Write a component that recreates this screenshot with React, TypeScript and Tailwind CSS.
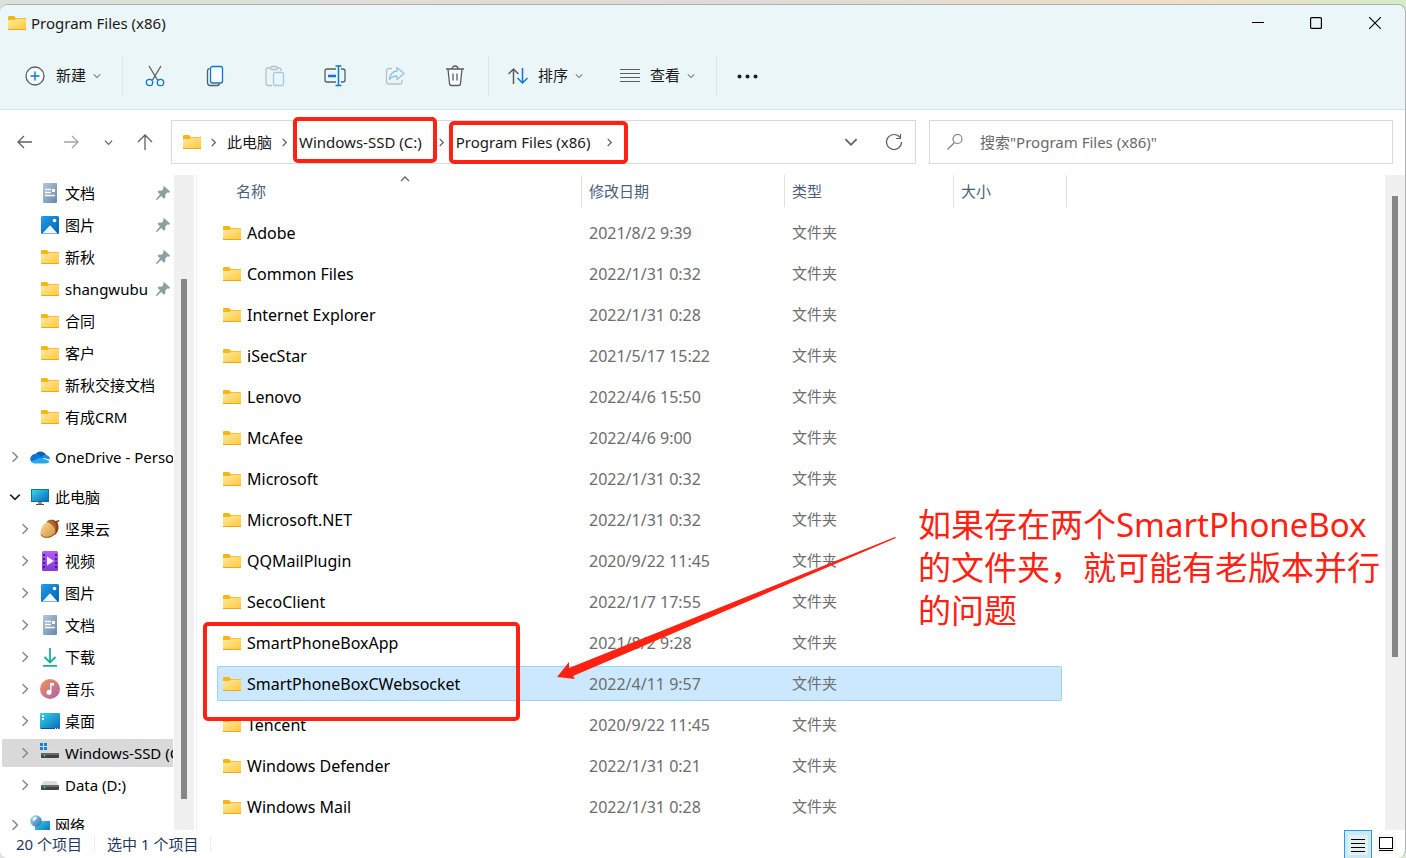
import React from 'react';

type IconName =
    | 'folder' | 'document' | 'picture' | 'onedrive' | 'pc' | 'nut' | 'video'
    | 'download' | 'music' | 'desktop' | 'systemDrive' | 'drive' | 'network';

interface NavItem {
    id: string;
    label: string;
    icon: IconName;
    level: 0 | 1;
    expander?: 'open' | 'closed';
    pinned?: boolean;
    active?: boolean;
}

interface FileRow {
    name: string;
    modified: string;
    selected?: boolean;
}

const navGroups: NavItem[][] = [
    [
        { id: 'q-docs', label: '文档', icon: 'document', level: 1, pinned: true },
        { id: 'q-pics', label: '图片', icon: 'picture', level: 1, pinned: true },
        { id: 'q-xinqiu', label: '新秋', icon: 'folder', level: 1, pinned: true },
        { id: 'q-shangwubu', label: 'shangwubu', icon: 'folder', level: 1, pinned: true },
        { id: 'q-hetong', label: '合同', icon: 'folder', level: 1 },
        { id: 'q-kehu', label: '客户', icon: 'folder', level: 1 },
        { id: 'q-jiaojie', label: '新秋交接文档', icon: 'folder', level: 1 },
        { id: 'q-crm', label: '有成CRM', icon: 'folder', level: 1 },
    ],
    [{ id: 'onedrive', label: 'OneDrive - Personal', icon: 'onedrive', level: 0, expander: 'closed' }],
    [
        { id: 'pc', label: '此电脑', icon: 'pc', level: 0, expander: 'open' },
        { id: 'nut', label: '坚果云', icon: 'nut', level: 1, expander: 'closed' },
        { id: 'video', label: '视频', icon: 'video', level: 1, expander: 'closed' },
        { id: 'pics', label: '图片', icon: 'picture', level: 1, expander: 'closed' },
        { id: 'docs', label: '文档', icon: 'document', level: 1, expander: 'closed' },
        { id: 'downloads', label: '下载', icon: 'download', level: 1, expander: 'closed' },
        { id: 'music', label: '音乐', icon: 'music', level: 1, expander: 'closed' },
        { id: 'desktop', label: '桌面', icon: 'desktop', level: 1, expander: 'closed' },
        { id: 'drive-c', label: 'Windows-SSD (C:)', icon: 'systemDrive', level: 1, expander: 'closed', active: true },
        { id: 'drive-d', label: 'Data (D:)', icon: 'drive', level: 1, expander: 'closed' },
    ],
    [{ id: 'network', label: '网络', icon: 'network', level: 0, expander: 'closed' }],
];

const files: FileRow[] = [
    { name: 'Adobe', modified: '2021/8/2 9:39' },
    { name: 'Common Files', modified: '2022/1/31 0:32' },
    { name: 'Internet Explorer', modified: '2022/1/31 0:28' },
    { name: 'iSecStar', modified: '2021/5/17 15:22' },
    { name: 'Lenovo', modified: '2022/4/6 15:50' },
    { name: 'McAfee', modified: '2022/4/6 9:00' },
    { name: 'Microsoft', modified: '2022/1/31 0:32' },
    { name: 'Microsoft.NET', modified: '2022/1/31 0:32' },
    { name: 'QQMailPlugin', modified: '2020/9/22 11:45' },
    { name: 'SecoClient', modified: '2022/1/7 17:55' },
    { name: 'SmartPhoneBoxApp', modified: '2021/8/2 9:28' },
    { name: 'SmartPhoneBoxCWebsocket', modified: '2022/4/11 9:57', selected: true },
    { name: 'Tencent', modified: '2020/9/22 11:45' },
    { name: 'Windows Defender', modified: '2022/1/31 0:21' },
    { name: 'Windows Mail', modified: '2022/1/31 0:28' },
];

const FolderIcon: React.FC = () => (
    <svg width="18" height="14" viewBox="0 0 18 14" className="shrink-0">
        <path d="M0 1a1 1 0 0 1 1-1h5l2 2h10v4H0z" fill="#f8b516" />
        <path d="M0 4h6.500l1.500-1.200h10V13H0z" fill="url(#folder-face)" />
        <path d="M0 13h18v1H0z" fill="#eda91e" />
    </svg>
);

// gradients shared by all the icons on the page
const IconDefs: React.FC = () => (
    <svg width="0" height="0" className="absolute" aria-hidden="true">
        <defs>
            <linearGradient id="folder-face" x1="0" y1="0" x2="1" y2="1">
                <stop offset="0" stopColor="#ffe9a2" />
                <stop offset="1" stopColor="#ffca3c" />
            </linearGradient>
            <linearGradient id="doc-face" x1="0" y1="0" x2="1" y2="1">
                <stop offset="0" stopColor="#b4c8dc" />
                <stop offset="1" stopColor="#6a87a6" />
            </linearGradient>
            <linearGradient id="pic-face" x1="0" y1="0" x2="1" y2="1">
                <stop offset="0" stopColor="#1ea0ea" />
                <stop offset="1" stopColor="#0560b4" />
            </linearGradient>
            <linearGradient id="screen-face" x1="0" y1="0" x2="1" y2="1">
                <stop offset="0" stopColor="#34d6e8" />
                <stop offset="1" stopColor="#0a68bd" />
            </linearGradient>
            <linearGradient id="video-face" x1="0" y1="0" x2="0" y2="1">
                <stop offset="0" stopColor="#b45cf6" />
                <stop offset="1" stopColor="#8238d8" />
            </linearGradient>
            <linearGradient id="nut-face" x1="0" y1="0" x2="1" y2="1">
                <stop offset="0" stopColor="#f8dc98" />
                <stop offset="1" stopColor="#d09038" />
            </linearGradient>
            <linearGradient id="music-face" x1="0" y1="0" x2="1" y2="1">
                <stop offset="0" stopColor="#f49350" />
                <stop offset="1" stopColor="#a860b4" />
            </linearGradient>
            <linearGradient id="globe-face" x1="0" y1="0" x2="1" y2="1">
                <stop offset="0" stopColor="#b4dcf2" />
                <stop offset="1" stopColor="#1f6ca8" />
            </linearGradient>
        </defs>
    </svg>
);

const DriveBody: React.FC = () => (
    <>
        <path d="M4 6h12l3 5H1z" fill="#d9dcdf" />
        <rect x="1" y="10" width="18" height="5" rx="1" fill="#414141" />
        <rect x="1" y="10" width="18" height="2" rx="1" fill="#686868" />
        <circle cx="4.500" cy="12.500" r="1" fill="#2fdc4a" />
    </>
);

const ItemIcon: React.FC<{ name: IconName }> = ({ name }) => {
    if (name === 'folder') {
        return <FolderIcon />;
    }
    return (
        <svg width="20" height="20" viewBox="0 0 20 20" className="shrink-0">
            {name === 'document' && (
                <>
                    <rect x="3" width="14" height="20" rx="1" fill="url(#doc-face)" />
                    <path d="M5 6.500h6M5 9.500h6M5 12.500h10" stroke="#fff" strokeWidth="1.300" />
                    <path d="M12 6h3v3h-3z" fill="#fff" />
                </>
            )}
            {name === 'picture' && (
                <>
                    <rect x="1" y="1" width="18" height="18" rx="1.500" fill="url(#pic-face)" />
                    <path d="M2.500 18.500 9.200 11a1 1 0 0 1 1.600 0l6.700 7.500z" fill="#f2f8fe" />
                    <circle cx="14.500" cy="5.500" r="1.800" fill="#fff" />
                </>
            )}
            {name === 'onedrive' && (
                <>
                    <path d="M5 8a6 6 0 0 1 11 0l-4 4z" fill="#0f5fb8" />
                    <path d="M5.500 7A4.800 4.800 0 0 0 1.500 15l10-4.500A6 6 0 0 0 5.500 7z" fill="#0a78d6" />
                    <path d="M15.500 8a4.400 4.400 0 0 1 4.500 4.500l-9-2A5 5 0 0 1 15.500 8z" fill="#1490df" />
                    <path d="M10.500 10.500 1.500 15a4 4 0 0 0 3 1.500h11.500a4 4 0 0 0 3.600-2.500z" fill="#2ba6ea" />
                </>
            )}
            {name === 'pc' && (
                <>
                    <rect x="1" y="2" width="18" height="13" rx="0.500" fill="#1a6f98" />
                    <rect x="2" y="3" width="16" height="11" fill="url(#screen-face)" />
                    <path d="M8 15h4v2H8z" fill="#8a9298" />
                    <path d="M6 17h8v1H6z" fill="#4d5257" />
                </>
            )}
            {name === 'nut' && (
                <>
                    <path d="M7 2.500C9 .500 13 0 15.500 2l3.500-1 .500 1-2.200 1.500c2 3 2 9-2.300 12.500l-4 1z" fill="#8a4518" />
                    <path d="M6.500 3c3-3 7-2 8.500 1s1 8-2 11z" fill="#b5662a" />
                    <path d="M7 3C3 5 .500 10 .500 14.500c.500 4 6 5 10 4 4-1.500 5.500-4.500 4.500-8C13.500 7 10.500 4 7 3z" fill="url(#nut-face)" />
                    <path d="M1 15.500c2 4 10 4 13.500-1" stroke="#8a5a20" fill="none" />
                </>
            )}
            {name === 'video' && (
                <>
                    <rect x="2" width="16" height="20" rx="1.500" fill="url(#video-face)" />
                    <path d="M4 3v15M16 3v15" stroke="#43207c" strokeWidth="2" strokeDasharray="2 2" />
                    <path d="M7 5.500v9l7-4.500z" fill="#f4eefc" />
                </>
            )}
            {name === 'download' && (
                <path d="M10 1v14M4.500 10l5.500 5.500 5.500-5.500M3 18.800h14" stroke="#17b096" strokeWidth="1.800" fill="none" />
            )}
            {name === 'music' && (
                <>
                    <circle cx="10" cy="10" r="10" fill="url(#music-face)" />
                    <path d="M10 4h4v2.500h-2.500v6.700A2.500 2.500 0 1 1 10 11z" fill="#fff" />
                </>
            )}
            {name === 'desktop' && (
                <>
                    <rect y="2" width="20" height="16" rx="1" fill="url(#screen-face)" />
                    <path d="M2 4h2v2H2zM2 7h2v2H2z" fill="#fff" />
                    <path d="M1 17.500h18" stroke="#0a4d90" />
                    <path d="M15 17.500h1M17 17.500h1" stroke="#fff" />
                </>
            )}
            {name === 'systemDrive' && (
                <>
                    <DriveBody />
                    <path d="M0 0h8v8H0z" fill="#d9d9d9" />
                    <path d="M0 0h3v3H0zM4 0h3v3H4zM0 4h3v3H0zM4 4h3v3H4z" fill="#1180d8" />
                </>
            )}
            {name === 'drive' && <DriveBody />}
            {name === 'network' && (
                <>
                    <rect x="5" y="6" width="15" height="12" fill="url(#screen-face)" />
                    <circle cx="6" cy="6" r="5.800" fill="url(#globe-face)" />
                    <path d="M3 3c2-2 4-1 4 0S5 5 4 6 2 5 3 3z" fill="#e4f4fc" />
                </>
            )}
        </svg>
    );
};

const PinIcon: React.FC = () => (
    <svg width="14" height="14" viewBox="0 0 14 14" className="mr-[3px] ml-auto shrink-0">
        <path d="M8 0l6 5.500-1 1.200-1.800-.2-2 2.300.2 2.700-1.400 1.300L5.200 10 1 14l-1-.200.200-1L4 8.500 1.500 5.800 3 4.500l2.500.2L7.500 2.600 7.200 1z" fill="#929ea6" />
    </svg>
);

const Chevron: React.FC<{ dir: 'right' | 'down' | 'up'; size?: number; className?: string }> = ({ dir, size = 10, className = '' }) => {
    const paths = {
        right: 'M3 1l4 4-4 4',
        down: 'M1 3l4 4 4-4',
        up: 'M1 6l4-4 4 4',
    };
    return (
        <svg width={size} height={size} viewBox="0 0 10 10" className={`shrink-0 ${className}`}>
            <path d={paths[dir]} fill="none" stroke="currentColor" strokeWidth="1.300" />
        </svg>
    );
};

const Separator: React.FC<{ className?: string }> = ({ className = '' }) => (
    <div className={`h-10 w-px bg-[#d9e6e8] ${className}`} />
);

const ToolButton: React.FC<{ label: string; children: React.ReactNode }> = ({ label, children }) => (
    <button type="button" aria-label={label} className="flex h-10 w-[60px] items-center justify-center">
        <svg width="22" height="22" viewBox="0 0 22 22" fill="none" stroke="#5c5c5c" strokeWidth="1.300">
            {children}
        </svg>
    </button>
);

const TitleBar: React.FC = () => (
    <header className="flex h-9 items-center pl-2">
        <FolderIcon />
        <h1 className="ml-[5px] text-[15px] text-[#1a1a1a]">Program Files (x86)</h1>
        <div className="ml-auto flex h-full">
            <button type="button" aria-label="最小化" className="flex w-[58px] items-center justify-center">
                <svg width="12" height="12" viewBox="0 0 12 12"><path d="M0 5.500h12" stroke="#000" /></svg>
            </button>
            <button type="button" aria-label="最大化" className="flex w-[58px] items-center justify-center">
                <svg width="12" height="12" viewBox="0 0 12 12"><rect x="0.600" y="0.600" width="10.800" height="10.800" rx="1" fill="none" stroke="#000" strokeWidth="1.200" /></svg>
            </button>
            <button type="button" aria-label="关闭" className="flex w-[60px] items-center justify-center">
                <svg width="12" height="12" viewBox="0 0 12 12"><path d="M0 0l12 12M12 0L0 12" stroke="#000" strokeWidth="1.100" /></svg>
            </button>
        </div>
    </header>
);

const CommandBar: React.FC = () => (
    <div role="toolbar" className="flex h-[69px] items-center border-b border-[#d5e4e6] pt-px pl-[25px] text-[15px] text-[#1a1a1a]">
        <button type="button" className="flex items-center">
            <svg width="20" height="20" viewBox="0 0 20 20" fill="none">
                <circle cx="10" cy="10" r="9" stroke="#5c5c5c" strokeWidth="1.300" fill="#f7fbfc" />
                <path d="M10 5.500v9M5.500 10h9" stroke="#0a78d4" strokeWidth="1.400" />
            </svg>
            <span className="mr-[7px] ml-[11px]">新建</span>
            <Chevron dir="down" size={8} className="mr-px text-[#777]" />
        </button>
        <Separator className="mr-0.5 ml-5" />
        <ToolButton label="剪切">
            <path d="M5 1l8.500 14M17 1L8.500 15" />
            <circle cx="5.500" cy="17.500" r="3.200" stroke="#0a78d4" />
            <circle cx="16.500" cy="17.500" r="3.200" stroke="#0a78d4" />
        </ToolButton>
        <ToolButton label="复制">
            <path d="M5.500 3.500A2.500 2.500 0 0 0 3.500 6v11.500a3 3 0 0 0 3 3H13a2.500 2.500 0 0 0 2.500-2" />
            <rect x="6.500" y="1.500" width="12" height="16.500" rx="2" stroke="#0a78d4" fill="#f7fbfc" />
        </ToolButton>
        <ToolButton label="粘贴">
            <path d="M7 3H4a2 2 0 0 0-2 2v13.500a2 2 0 0 0 2 2h4M13.500 3H15a2 2 0 0 1 2 2v1" stroke="#b9c0c2" />
            <rect x="6.500" y="1.500" width="7" height="3" rx="1.500" stroke="#b9c0c2" />
            <rect x="9.500" y="7.500" width="10" height="13" rx="1.500" stroke="#9ccbee" />
        </ToolButton>
        <ToolButton label="重命名">
            <path d="M12 4H3a2 2 0 0 0-2 2v9a2 2 0 0 0 2 2h9M17 4h2a2 2 0 0 1 2 2v9a2 2 0 0 1-2 2h-2" />
            <path d="M4 11h8" stroke="#0a78d4" strokeWidth="2.400" />
            <path d="M11.500 1h6M11.500 20.500h6M14.500 1v19" stroke="#0a78d4" strokeWidth="1.500" />
        </ToolButton>
        <ToolButton label="共享">
            <path d="M8 3.500H5a2.500 2.500 0 0 0-2.500 2.500v10.500A2.500 2.500 0 0 0 5 19h10.500a2.500 2.500 0 0 0 2.500-2.500V15" stroke="#b9c0c2" />
            <path d="M13 2.500l7 6-7 6V11c-4 0-5.500 1-7.500 3.500C6 9.500 8.500 6.500 13 6z" stroke="#8fc3ec" strokeLinejoin="round" />
        </ToolButton>
        <ToolButton label="删除">
            <path d="M4 4l1.500 14.500a2 2 0 0 0 2 2h7a2 2 0 0 0 2-2L18 4" fill="#f7fbfc" />
            <path d="M2 4h18M8 4a3 3 0 0 1 6 0" />
            <path d="M9 8.500v7M13 8.500v7" />
        </ToolButton>
        <Separator className="mr-[19px] ml-[3px]" />
        <button type="button" className="mr-9 flex items-center">
            <svg width="20" height="20" viewBox="0 0 20 20" fill="none" strokeWidth="1.500">
                <path d="M5.500 18V3M.500 8l5-5 5 5" stroke="#5c5c5c" />
                <path d="M14.500 2v15M9.500 12l5 5 5-5" stroke="#0a78d4" />
            </svg>
            <span className="mr-[7px] ml-2.5">排序</span>
            <Chevron dir="down" size={8} className="mr-px text-[#777]" />
        </button>
        <button type="button" className="flex items-center">
            <svg width="20" height="20" viewBox="0 0 20 20"><path d="M0 3.500h20M0 7.500h20M0 11.500h20M0 15.500h20" stroke="#5c5c5c" /></svg>
            <span className="mr-[7px] ml-2.5">查看</span>
            <Chevron dir="down" size={8} className="mr-px text-[#777]" />
        </button>
        <Separator className="mr-5 ml-5" />
        <button type="button" aria-label="更多">
            <svg width="22" height="20" viewBox="0 0 22 20" fill="#1a1a1a">
                <circle cx="2.500" cy="10.500" r="2" />
                <circle cx="10.500" cy="10.500" r="2" />
                <circle cx="18.500" cy="10.500" r="2" />
            </svg>
        </button>
    </div>
);

const AddressBar: React.FC = () => (
    <div className="flex items-center pt-2.5 pr-3 pb-[11px] pl-[17px] text-[15px] text-[#1a1a1a]">
        <button type="button" aria-label="后退" className="mr-[30px]">
            <svg width="16" height="16" viewBox="0 0 16 16" fill="none" stroke="#606060" strokeWidth="1.300"><path d="M15 8H1M7 2L1 8l6 6" /></svg>
        </button>
        <button type="button" aria-label="前进" className="mr-[25px]">
            <svg width="16" height="16" viewBox="0 0 16 16" fill="none" stroke="#a4a4a4" strokeWidth="1.300"><path d="M1 8h14M9 2l6 6-6 6" /></svg>
        </button>
        <button type="button" aria-label="最近浏览的位置" className="mr-6">
            <Chevron dir="down" size={9} className="text-[#606060]" />
        </button>
        <button type="button" aria-label="向上" className="mr-[18px]">
            <svg width="16" height="16" viewBox="0 0 16 16" fill="none" stroke="#606060" strokeWidth="1.300"><path d="M8 16V1M1 8l7-7 7 7" /></svg>
        </button>
        <nav aria-label="路径" className="mr-[13px] flex h-11 min-w-0 flex-[732] items-center border border-[#d9d9d9] pl-[11px] whitespace-nowrap">
            <FolderIcon />
            <Chevron dir="right" size={9} className="mx-2 text-[#555]" />
            <a href="#pc" className="pl-px">此电脑</a>
            <Chevron dir="right" size={9} className="mx-2 text-[#555]" />
            <a href="#drive-c" className="pr-[7px] pl-0.5">Windows-SSD (C:)</a>
            <Chevron dir="right" size={9} className="mx-2 text-[#555]" />
            <a href="#program-files" className="pr-[7px] pl-0.5">Program Files (x86)</a>
            <Chevron dir="right" size={9} className="mx-2 text-[#555]" />
            <button type="button" aria-label="历史记录" className="mr-[27px] ml-auto">
                <Chevron dir="down" size={14} className="text-[#606060]" />
            </button>
            <button type="button" aria-label="刷新" className="mr-3">
                <svg width="18" height="18" viewBox="0 0 18 18" fill="none" stroke="#606060" strokeWidth="1.200">
                    <path d="M15 4.500A7.500 7.500 0 1 0 16.500 9M15.500 1v4.500H11" />
                </svg>
            </button>
        </nav>
        <label className="flex h-11 min-w-0 flex-[446] items-center border border-[#d9d9d9] pl-4">
            <svg width="18" height="18" viewBox="0 0 18 18" fill="none" stroke="#777" strokeWidth="1.100" className="shrink-0">
                <circle cx="11.500" cy="6" r="4.500" />
                <path d="M8.500 9.500L1.500 16.500" />
            </svg>
            <input
                type="search"
                aria-label="搜索"
                placeholder={'搜索"Program Files (x86)"'}
                className="ml-4 min-w-0 flex-1 bg-transparent outline-none placeholder:text-[#6a6a6a]"
            />
        </label>
    </div>
);

const NavRow: React.FC<{ item: NavItem }> = ({ item }) => (
    <li className="flex h-8 items-center">
        <a
            href={`#${item.id}`}
            className={`flex h-7 w-full items-center overflow-hidden rounded-l-xs whitespace-nowrap ${item.level === 1 ? 'pl-[18px]' : 'pl-2'} ${item.active ? 'bg-[#d9d9d9]' : ''}`}
        >
            <span className="mr-2.5 flex w-2.5 shrink-0 justify-center">
                {item.expander === 'closed' && <Chevron dir="right" size={12} className="text-[#8a8a8a]" />}
                {item.expander === 'open' && <Chevron dir="down" size={12} className="text-[#222]" />}
            </span>
            <span className="mr-[5px] flex w-5 shrink-0 justify-center">
                <ItemIcon name={item.icon} />
            </span>
            <span>{item.label}</span>
            {item.pinned && <PinIcon />}
        </a>
    </li>
);

const Sidebar: React.FC = () => (
    <nav aria-label="导航窗格" className="w-[174px] shrink-0 overflow-hidden pt-0.5 pr-px pl-0.5 text-[15px] text-black">
        {navGroups.map(group => (
            <ul key={group[0].id} className="mb-2">
                {group.map(item => <NavRow key={item.id} item={item} />)}
            </ul>
        ))}
    </nav>
);

const FileTable: React.FC = () => (
    <div className="min-w-0 flex-1 overflow-hidden border-l border-[#f0f0f0] pl-5">
        <table className="w-[850px] table-fixed border-separate border-spacing-0 text-left">
            <colgroup>
                <col className="w-[365px]" />
                <col className="w-[203px]" />
                <col className="w-[169px]" />
                <col className="w-[113px]" />
            </colgroup>
            <thead className="text-[15px] text-[#4c607a]">
                <tr className="h-[37px] align-top">
                    <th scope="col" className="relative p-0 font-normal">
                        <div className="flex h-8 items-center border-r border-[#e2e2e2] pl-[19px]">名称</div>
                        <Chevron dir="up" className="absolute top-0 left-1/2 text-[#666]" />
                    </th>
                    <th scope="col" className="p-0 font-normal">
                        <div className="flex h-8 items-center border-r border-[#e2e2e2] pl-[7px]">修改日期</div>
                    </th>
                    <th scope="col" className="p-0 font-normal">
                        <div className="flex h-8 items-center border-r border-[#e2e2e2] pl-[7px]">类型</div>
                    </th>
                    <th scope="col" className="p-0 font-normal">
                        <div className="flex h-8 items-center border-r border-[#e2e2e2] pl-[7px]">大小</div>
                    </th>
                </tr>
            </thead>
            <tbody className="text-base text-[#6d6d6d]">
                {files.map(file => {
                    const tone = file.selected ? 'border-[#99d1ff] bg-[#cce8ff]' : 'border-transparent';
                    return (
                        <tr key={file.name} className="h-[41px]" aria-selected={file.selected}>
                            <td className="p-0">
                                <div className={`flex h-[35px] items-center rounded-l-xs border-y border-l pl-[5px] text-black ${tone}`}>
                                    <FolderIcon />
                                    <span className="ml-1.5">{file.name}</span>
                                </div>
                            </td>
                            <td className="p-0">
                                <div className={`flex h-[35px] items-center border-y pl-[7px] ${tone}`}>{file.modified}</div>
                            </td>
                            <td className="p-0 text-[15px]">
                                <div className={`flex h-[35px] items-center border-y pl-[7px] ${tone}`}>文件夹</div>
                            </td>
                            <td className="p-0">
                                <div className={`mr-[5px] h-[35px] rounded-r-xs border-y border-r ${tone}`} />
                            </td>
                        </tr>
                    );
                })}
            </tbody>
        </table>
    </div>
);

const StatusBar: React.FC = () => (
    <footer className="flex h-7 shrink-0 items-center pl-4 text-[15px] text-[#1e395b]">
        <span>20 个项目</span>
        <div className="mx-3 h-4 w-px bg-[#ececec]" />
        <span>选中 1 个项目</span>
        <div className="mx-3 h-4 w-px bg-[#ececec]" />
        <div className="mr-[9px] ml-auto flex h-full items-center">
            <button type="button" aria-label="详细信息" className="flex h-full w-7 items-center justify-center border border-b-0 border-[#26a0da] bg-[#cbe8f6]">
                <svg width="20" height="20" viewBox="0 0 20 20">
                    <rect width="20" height="20" rx="2" fill="#e2f0f3" />
                    <path d="M3 4.500h14M3 8.500h14M3 12.500h14M3 16.500h14" stroke="#000" />
                </svg>
            </button>
            <button type="button" aria-label="大图标" className="ml-1">
                <svg width="20" height="20" viewBox="0 0 20 20">
                    <rect width="20" height="20" rx="2" fill="#f7f7f7" />
                    <rect x="3.500" y="3.500" width="13" height="11" fill="#fff" stroke="#000" />
                    <path d="M3 16.500h14" stroke="#000" />
                </svg>
            </button>
        </div>
    </footer>
);

// red marker layer that floats over the window
const Annotations: React.FC = () => (
    <div className="pointer-events-none absolute inset-0">
        <div className="absolute top-[117px] left-[293px] h-[46px] w-36 rounded-[5px] border-4 border-[#ff2112]" />
        <div className="absolute top-[121px] left-[449px] h-[43px] w-[179px] rounded-[5px] border-4 border-[#ff2112]" />
        <div className="absolute top-[622px] left-[203px] h-[99px] w-[317px] rounded-[5px] border-4 border-[#ff2112]" />
        <svg width="340" height="142" viewBox="0 0 340 142" className="absolute top-[537px] left-[556px]">
            <path d="M1 140L13 125v6L339 0l1 1L17 139l2 3z" fill="#ff2112" />
        </svg>
        <p className="absolute top-[503px] left-[918px] text-[33px] leading-[43px] whitespace-nowrap text-[#ff2112]">
            如果存在两个SmartPhoneBox
            <br />
            的文件夹，就可能有老版本并行
            <br />
            的问题
        </p>
    </div>
);

const App: React.FC = () => (
    <div className="relative flex h-screen flex-col overflow-hidden bg-[linear-gradient(90deg,#dfe2da,#dedcd6_55%,#f0dfc8_85%,#d5edcb)] pt-1 font-['Noto_Sans','Noto_Sans_CJK_SC',sans-serif]">
        <IconDefs />
        <main className="flex min-h-0 flex-1 flex-col overflow-hidden rounded-lg border-t border-r border-[#b0b0b0] bg-white">
            <div className="bg-[#eaf6f8]">
                <TitleBar />
                <CommandBar />
            </div>
            <AddressBar />
            <div className="flex min-h-0 flex-1">
                <Sidebar />
                <div className="mr-0.5 w-5 shrink-0 bg-[#f0f0f0] pt-[104px] pl-[7px]">
                    <div className="h-[520px] w-1.5 bg-[#868686]" />
                </div>
                <FileTable />
                <div className="w-5 shrink-0 bg-[#f0f0f0] pt-[21px] pl-[7px]">
                    <div className="h-[461px] w-1.5 bg-[#868686]" />
                </div>
            </div>
            <StatusBar />
        </main>
        <Annotations />
    </div>
);

export default App;
